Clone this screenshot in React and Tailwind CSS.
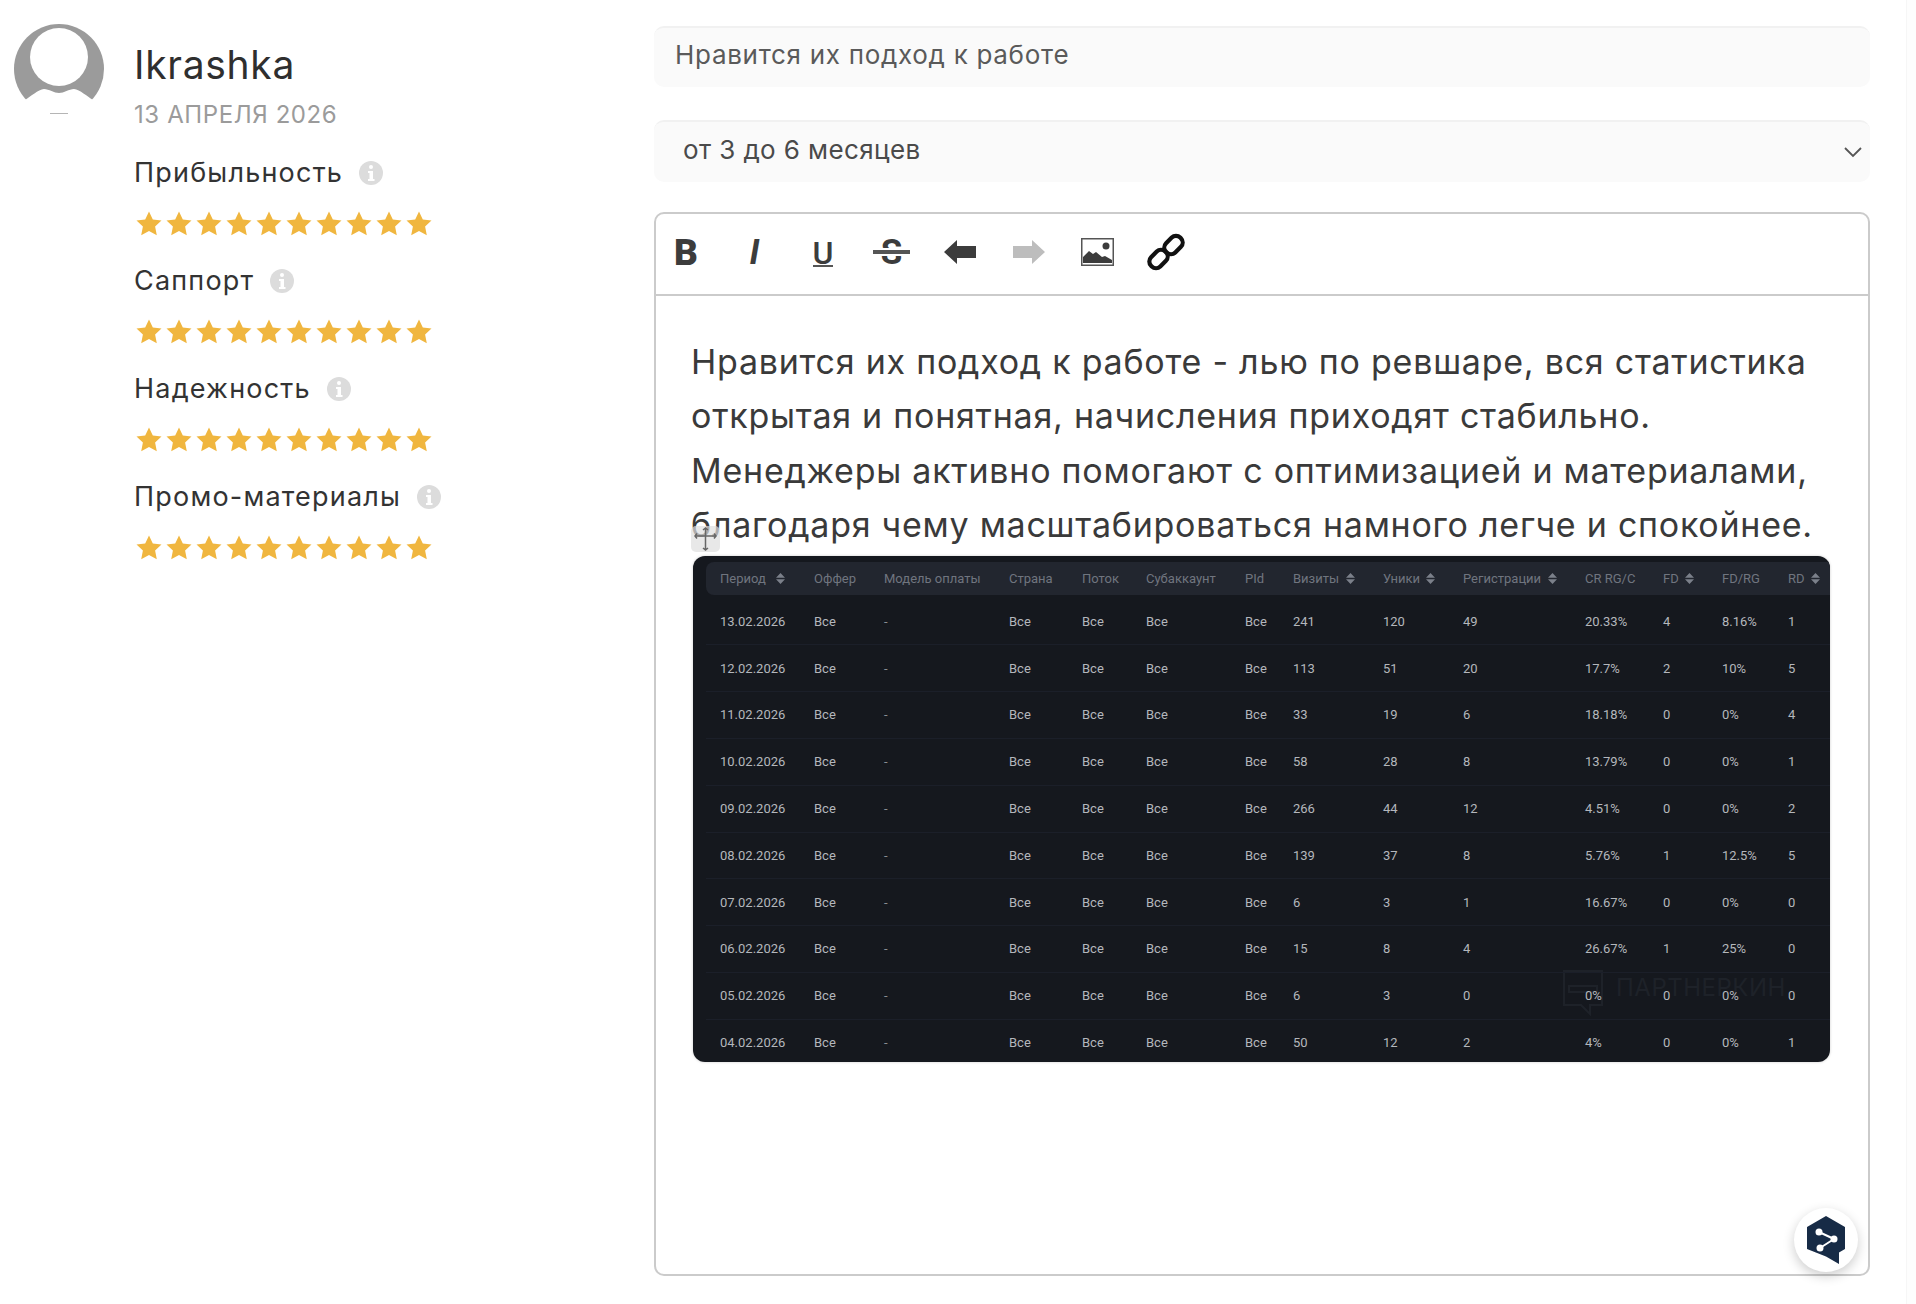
import React from 'react';

const textFont = "font-['Inter','Noto_Sans',sans-serif]";

const headers = [
  ['Период', true, 'ml-[10px]'], ['Оффер'], ['Модель оплаты'], ['Страна'], ['Поток'], ['Субаккаунт'], ['PId'],
  ['Визиты', true, 'ml-[7px]'], ['Уники', true, 'ml-[6px]'], ['Регистрации', true, 'ml-[7px]'], ['CR RG/C'], ['FD', true, 'ml-[6px]'], ['FD/RG'], ['RD', true, 'ml-[6px]'],
];

const rows = [
  ['13.02.2026', '241', '120', '49', '20.33%', '4', '8.16%', '1'],
  ['12.02.2026', '113', '51', '20', '17.7%', '2', '10%', '5'],
  ['11.02.2026', '33', '19', '6', '18.18%', '0', '0%', '4'],
  ['10.02.2026', '58', '28', '8', '13.79%', '0', '0%', '1'],
  ['09.02.2026', '266', '44', '12', '4.51%', '0', '0%', '2'],
  ['08.02.2026', '139', '37', '8', '5.76%', '1', '12.5%', '5'],
  ['07.02.2026', '6', '3', '1', '16.67%', '0', '0%', '0'],
  ['06.02.2026', '15', '8', '4', '26.67%', '1', '25%', '0'],
  ['05.02.2026', '6', '3', '0', '0%', '0', '0%', '0'],
  ['04.02.2026', '50', '12', '2', '4%', '0', '0%', '1'],
];

const ratings = ['Прибыльность', 'Саппорт', 'Надежность', 'Промо-материалы'];

const gridCols = 'grid grid-cols-[94px_70px_125px_73px_64px_99px_48px_90px_80px_122px_78px_59px_66px_1fr]';

function Star() {
  return (
    <svg width="26" height="25" viewBox="0 0 26 25" className="mr-[4px] shrink-0">
      <path d="M13 0.5l3.8 8 8.7 1.1-6.4 6 1.7 8.7L13 20l-7.8 4.3 1.7-8.7-6.4-6 8.7-1.1z" fill="#f0b63f" />
    </svg>
  );
}

function Info() {
  return (
    <span className="w-[24px] h-[24px] rounded-full bg-[#dcdcdc] flex items-center justify-center shrink-0">
      <svg width="8" height="16" viewBox="0 0 8 16">
        <rect x="2" y="0" width="4" height="4" rx="2" fill="#fff" />
        <path d="M1 6h5v8h1.500v2H1v-2h1.500V8H1z" fill="#fff" />
      </svg>
    </span>
  );
}

function Sort({ className }) {
  return (
    <svg width="9" height="11" viewBox="0 0 9 11" className={`shrink-0 ${className}`}>
      <path d="M4.500 0L9 4.800H0zM4.500 11L0 6.200h9z" fill="#7b808a" />
    </svg>
  );
}

function Avatar() {
  return (
    <svg width="90" height="92" viewBox="0 0 90 92" className="shrink-0">
      <circle cx="45" cy="45" r="45" fill="#9b9b9b" />
      <path d="M0 92V76h11C17 72 24 66 30 65c5 0 10 4 15 4s10-4 15-4c6 1 13 7 19 11h11v16z" fill="#fff" />
      <circle cx="45" cy="33" r="29" fill="#fff" />
      <rect x="36" y="89" width="18" height="1" fill="#b5b5b5" />
    </svg>
  );
}

function Toolbar() {
  const btn = 'w-[60px] h-full flex items-center justify-center shrink-0';
  const letter = "font-['Roboto',sans-serif] text-[#3c3c3c] leading-none";
  return (
    <div className="h-[82px] flex items-center gap-[8.500px] border-b-2 border-[#cbcbcb] pb-[4px]">
      <div className={btn}><span className={`${letter} text-[37px] font-black`}>B</span></div>
      <div className={btn}><span className={`${letter} text-[35px] font-bold italic`}>I</span></div>
      <div className={btn}><span className={`${letter} text-[32px] font-medium border-b-2 border-[#555] h-[30px] leading-[27px]`}>U</span></div>
      <div className={btn}>
        <span className={`${letter} text-[35px] font-bold relative`}>
          S
          <span className="absolute left-[-8px] right-[-8px] top-[13px] h-[8px] border-y-2 border-white bg-[#555]" />
        </span>
      </div>
      <div className={btn}>
        <svg width="32" height="24" viewBox="0 0 32 24"><path d="M0 12L13 0v6h19v12H13v6z" fill="#3c3c3c" /></svg>
      </div>
      <div className={btn}>
        <svg width="32" height="24" viewBox="0 0 32 24"><path d="M32 12L19 0v6H0v12h19v6z" fill="#bdbdbd" /></svg>
      </div>
      <div className={btn}>
        <svg width="33" height="28" viewBox="0 0 33 28">
          <rect x="0.750" y="0.750" width="31.500" height="26.500" fill="#fff" stroke="#555" strokeWidth="1.500" />
          <circle cx="25" cy="8" r="3.500" fill="#3c3c3c" />
          <path d="M2 25v-6l6-6 4 3 3-2 6 5 3-1 7 4v3z" fill="#3c3c3c" />
        </svg>
      </div>
      <div className={btn}>
        <svg width="38" height="38" viewBox="0 0 38 38" fill="none" stroke="#111" strokeWidth="4.200">
          <rect x="20" y="2" width="13" height="20" rx="6" transform="rotate(45 26.500 12)" />
          <rect x="5" y="16" width="13" height="20" rx="6" transform="rotate(45 11.500 26)" />
        </svg>
      </div>
    </div>
  );
}

function StatsTable() {
  return (
    <div className="relative w-[1137px] h-[506px] bg-[#15181e] rounded-[12px] overflow-hidden pt-[6px] font-['Roboto',sans-serif] text-[13px] shadow-[0_0_3px_rgba(0,0,0,0.2)]">
      <div className="absolute left-[869px] top-[414px] flex items-start gap-[12px] text-[#1e2229] font-['Inter',sans-serif] text-[24px] leading-[36px] tracking-[0.5px]">
        <svg width="42" height="46" viewBox="0 0 42 46" fill="none" stroke="#1e2229" strokeWidth="2">
          <path d="M2 1h38v34H28v9l-9-9H2z" />
          <path d="M7 16h28v6H7z" />
        </svg>
        ПАРТНЕРКИН
      </div>
      <div className={`${gridCols} relative ml-[13px] pl-[14px] h-[33px] items-center bg-[#22262f] rounded-l-[8px] text-[#70757f]`}>
        {headers.map(([label, sortable, gap]) => (
          <div key={label} className="flex items-center whitespace-nowrap">
            {label}
            {sortable && <Sort className={gap} />}
          </div>
        ))}
      </div>
      <div className="relative mt-[3.500px]">
        {rows.map((r) => (
          <div key={r[0]} className={`${gridCols} ml-[13px] pl-[14px] h-[46.800px] items-center border-b border-[#1b1f29] text-[#b4b7bc]`}>
            <div>{r[0]}</div>
            <div>Все</div>
            <div className="text-[#8a8d93]">-</div>
            <div>Все</div>
            <div>Все</div>
            <div>Все</div>
            <div>Все</div>
            {r.slice(1).map((v, i) => <div key={i}>{v}</div>)}
          </div>
        ))}
      </div>
    </div>
  );
}

export default function App() {
  return (
    <div className={`flex h-[1304px] bg-white overflow-hidden ${textFont}`}>
      <div className="w-[654px] shrink-0 flex items-start gap-[30px] pl-[14px] pt-[24px]">
        <Avatar />
        <div className="pt-[19px]">
          <div className="text-[39px] leading-[44px] tracking-[0.7px] text-[#2f2f2f]">Ikrashka</div>
          <div className="text-[24px] leading-[30px] mt-[13px] tracking-[0.6px] text-[#9b9b9b]">13 АПРЕЛЯ 2026</div>
          <div className="mt-[21px]">
            {ratings.map((label) => (
              <div key={label} className="h-[108px]">
                <div className="h-[44px] flex items-center gap-[16px] text-[27px] tracking-[1.200px] text-[#333]">
                  {label}
                  <Info />
                </div>
                <div className="flex mt-[16px] ml-[2px]">
                  {Array.from({ length: 10 }).map((_, i) => <Star key={i} />)}
                </div>
              </div>
            ))}
          </div>
        </div>
      </div>

      <div className="w-[1216px] shrink-0 pt-[26px]">
        <div className="h-[61px] rounded-[10px] bg-[#fafafa] border-t-2 border-[#f1f1f1] pl-[21px] pb-[6px] flex items-center text-[26px] tracking-[0.7px] text-[#5a5a5a]">
          Нравится их подход к работе
        </div>
        <div className="h-[62px] mt-[33px] rounded-[10px] bg-[#fafafa] border-t-2 border-[#f1f1f1] pl-[29px] pr-[8px] pb-[5px] flex items-center justify-between text-[26px] tracking-[0.4px] text-[#4a4a4a]">
          от 3 до 6 месяцев
          <svg width="18" height="11" viewBox="0 0 18 11" fill="none" stroke="#555" strokeWidth="1.800" className="mt-[5px]"><path d="M1 1l8 8 8-8" /></svg>
        </div>
        <div className="relative h-[1064px] mt-[30px] border-2 border-[#cbcbcb] rounded-[10px]">
          <Toolbar />
          <div className="pl-[35px] pt-[39px]">
            <div className="text-[34px] leading-[54.300px] tracking-[0.750px] text-[#3a3a3a] w-[1160px]">
              Нравится их подход к работе - лью по ревшаре, вся статистика открытая и понятная, начисления приходят стабильно. Менеджеры активно помогают с оптимизацией и материалами, благодаря чему масштабироваться намного легче и спокойнее.
            </div>
            <div className="mt-[4px] ml-[2px]"><StatsTable /></div>
          </div>
          <div className="absolute left-[35px] top-[312px] w-[29px] h-[26px] rounded-[5px] bg-[#dedede]/70 flex items-center justify-center">
            <svg width="25" height="24" viewBox="0 0 25 24" fill="none" stroke="#666" strokeWidth="1.500">
              <path d="M12.500 1v22M2 9h21M10 3l2.500-2L15 3M10 21l2.500 2 2.500-2M4 6.500L2 9l2 2.500M21 6.500L23 9l-2 2.500" />
            </svg>
          </div>
          <div className="absolute left-[1138px] top-[994px] w-[64px] h-[64px] rounded-full bg-white shadow-[0_4px_12px_rgba(0,0,0,0.2)] flex items-center justify-center">
            <svg width="40" height="48" viewBox="0 0 40 48">
              <path d="M20 0l19 11v22l-6 3.500V48l-13-7.500L1 33V11z" fill="#172b46" />
              <path d="M13 16l15 7-14 9" fill="none" stroke="#fff" strokeWidth="2" />
              <circle cx="13" cy="16" r="3.500" fill="#fff" />
              <circle cx="28" cy="23" r="3.500" fill="#fff" />
              <circle cx="14" cy="32" r="3.500" fill="#fff" />
            </svg>
          </div>
        </div>
      </div>

      <div className="ml-auto w-[10px] h-full bg-[#fdfdfd] border-l border-[#f6f6f6]" />
    </div>
  );
}
